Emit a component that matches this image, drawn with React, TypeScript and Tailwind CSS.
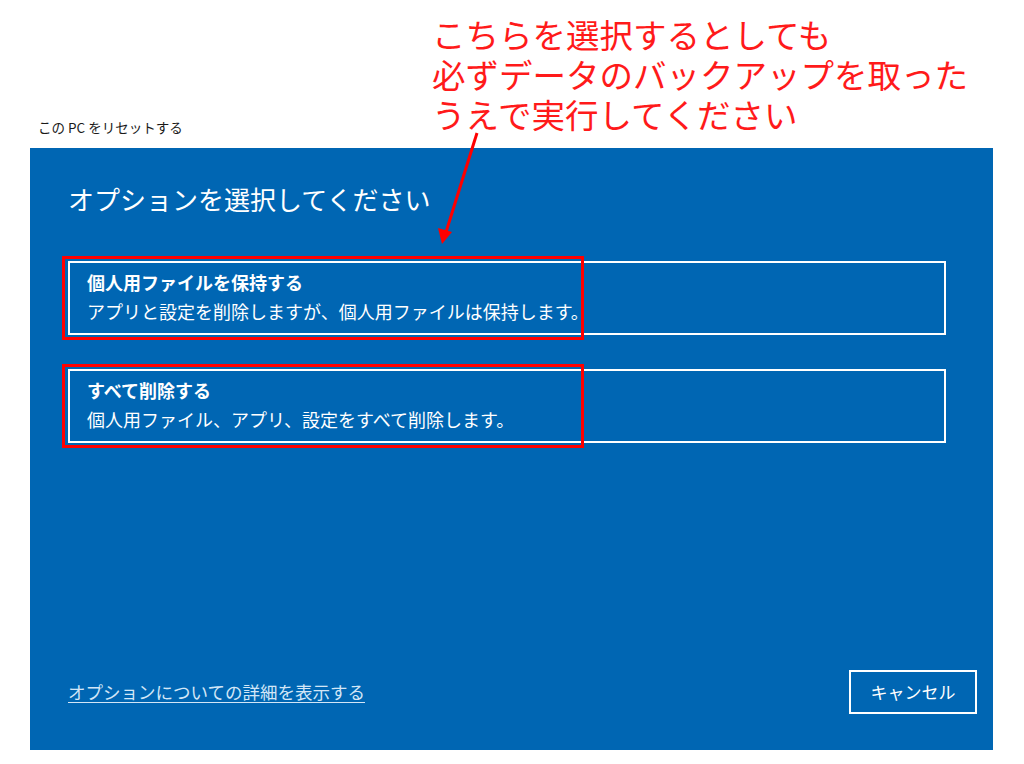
const jp = "font-['Noto_Sans_CJK_JP','Noto_Sans',sans-serif]";

type OptionProps = {
  title: string;
  description: string;
};

function ResetOption({ title, description }: OptionProps) {
  return (
    <div className="relative w-[878px] h-[74px] border-2 border-white pl-[17px] pt-[7px] text-white">
      <div className="text-[18px] leading-[24px] font-bold">{title}</div>
      <div className="text-[18px] leading-[28px] mt-[3px]">{description}</div>
      {/* red highlight box from the annotation */}
      <div className="absolute left-[-8px] top-[-7px] w-[522px] h-[84px] border-[3px] border-[#ff0000]" />
    </div>
  );
}

export default function App() {
  return (
    <div className={`relative w-[1024px] h-[764px] bg-white overflow-hidden ${jp}`}>
      <div className="flex h-[148px]">
        <div className="w-[432px] pl-[38px] self-end pb-[12px] text-[13.5px] leading-[18px] text-[#1a1a1a]">
          この PC をリセットする
        </div>
        <div className="pt-[14px] text-[33.5px] leading-[40px] text-[#ff1a1a]">
          <div>こちらを選択するとしても</div>
          <div>必ずデータのバックアップを取った</div>
          <div>うえで実行してください</div>
        </div>
      </div>

      <div className="ml-[30px] w-[963px] h-[602px] bg-[#0066b3] flex flex-col">
        <div className="pl-[38px] pt-[33px] text-[26px] leading-[36px] text-white">
          オプションを選択してください
        </div>
        <div className="pl-[38px] pt-[44px] flex flex-col gap-[34px]">
          <ResetOption
            title="個人用ファイルを保持する"
            description="アプリと設定を削除しますが、個人用ファイルは保持します。"
          />
          <ResetOption
            title="すべて削除する"
            description="個人用ファイル、アプリ、設定をすべて削除します。"
          />
        </div>
        <div className="mt-auto flex items-center justify-between pl-[38px] pr-[16px] pb-[36px]">
          <a className="text-[17.5px] leading-[24px] text-[#d3e6f7] underline underline-offset-[3px] cursor-pointer">
            オプションについての詳細を表示する
          </a>
          <button className="w-[128px] h-[44px] border-2 border-white text-white text-[17px] leading-[24px] font-normal">
            キャンセル
          </button>
        </div>
      </div>

      {/* annotation arrow */}
      <svg className="absolute left-0 top-0 pointer-events-none" width="1024" height="764">
        <line x1="477" y1="133" x2="446" y2="232" stroke="#ff0000" strokeWidth="3" />
        <polygon points="442,244 438,228 452,232" fill="#ff0000" />
      </svg>
    </div>
  );
}
